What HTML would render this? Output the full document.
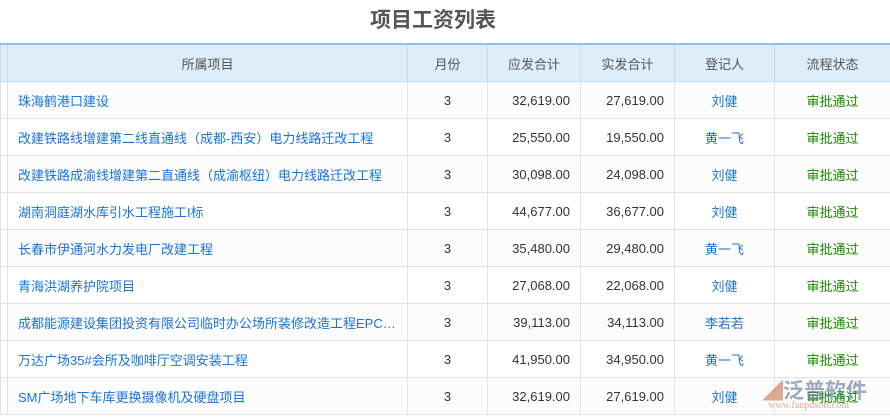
<!DOCTYPE html>
<html><head><meta charset="utf-8"><style>
body{margin:0;width:890px;height:419px;overflow:hidden;background:#fff;font-family:"Liberation Sans","Noto Sans CJK SC",sans-serif;position:relative}
h1{margin:0;position:absolute;top:6px;left:0;width:866px;text-align:center;font-size:21px;font-weight:bold;color:#555;line-height:30px}
table{position:absolute;top:43px;left:0;border-collapse:collapse;table-layout:fixed;width:890px;font-size:13px}
th{background:#deedfa;color:#555;font-weight:normal;height:36px;padding:0;border:1px solid #c7d9ea;border-top:2px solid #8cc1ea}
td{height:36px;border:1px solid #e3e3e3;color:#333;padding:0}
td.p{color:#1a73d9;padding-left:10px;white-space:nowrap;overflow:hidden;text-overflow:ellipsis}
td.c{text-align:center}
td.r{text-align:right;padding-right:10px}
td.n{color:#1a73d9;text-align:center}
td.s{color:#1a8a00;text-align:center}
tr:nth-child(even) td{background:#fcfcfc}
.logo{position:absolute;left:762px;top:375px;font-size:21px;color:#5a7597;opacity:.6;font-weight:bold}
.url{position:absolute;left:768px;top:400px;font-size:10px;color:#d88a6a;opacity:.7;font-family:"Liberation Serif",serif}
</style></head><body>
<h1>项目工资列表</h1>
<table>
<colgroup><col style="width:7px"><col style="width:400px"><col style="width:80px"><col style="width:93px"><col style="width:94px"><col style="width:100px"><col style="width:116px"></colgroup>
<tr><th></th><th>所属项目</th><th>月份</th><th>应发合计</th><th>实发合计</th><th>登记人</th><th>流程状态</th></tr>
<tr><td></td><td class="p">珠海鹤港口建设</td><td class="c">3</td><td class="r">32,619.00</td><td class="r">27,619.00</td><td class="n">刘健</td><td class="s">审批通过</td></tr>
<tr><td></td><td class="p">改建铁路线增建第二线直通线（成都-西安）电力线路迁改工程</td><td class="c">3</td><td class="r">25,550.00</td><td class="r">19,550.00</td><td class="n">黄一飞</td><td class="s">审批通过</td></tr>
<tr><td></td><td class="p">改建铁路成渝线增建第二直通线（成渝枢纽）电力线路迁改工程</td><td class="c">3</td><td class="r">30,098.00</td><td class="r">24,098.00</td><td class="n">刘健</td><td class="s">审批通过</td></tr>
<tr><td></td><td class="p">湖南洞庭湖水库引水工程施工I标</td><td class="c">3</td><td class="r">44,677.00</td><td class="r">36,677.00</td><td class="n">刘健</td><td class="s">审批通过</td></tr>
<tr><td></td><td class="p">长春市伊通河水力发电厂改建工程</td><td class="c">3</td><td class="r">35,480.00</td><td class="r">29,480.00</td><td class="n">黄一飞</td><td class="s">审批通过</td></tr>
<tr><td></td><td class="p">青海洪湖养护院项目</td><td class="c">3</td><td class="r">27,068.00</td><td class="r">22,068.00</td><td class="n">刘健</td><td class="s">审批通过</td></tr>
<tr><td></td><td class="p">成都能源建设集团投资有限公司临时办公场所装修改造工程EPC总承包</td><td class="c">3</td><td class="r">39,113.00</td><td class="r">34,113.00</td><td class="n">李若若</td><td class="s">审批通过</td></tr>
<tr><td></td><td class="p">万达广场35#会所及咖啡厅空调安装工程</td><td class="c">3</td><td class="r">41,950.00</td><td class="r">34,950.00</td><td class="n">黄一飞</td><td class="s">审批通过</td></tr>
<tr><td></td><td class="p">SM广场地下车库更换摄像机及硬盘项目</td><td class="c">3</td><td class="r">32,619.00</td><td class="r">27,619.00</td><td class="n">刘健</td><td class="s">审批通过</td></tr>
</table>
<div class="logo"><span style="color:#c87550">◢</span>泛普软件</div>
<div class="url">www.fanpusoft.com</div>
</body></html>
